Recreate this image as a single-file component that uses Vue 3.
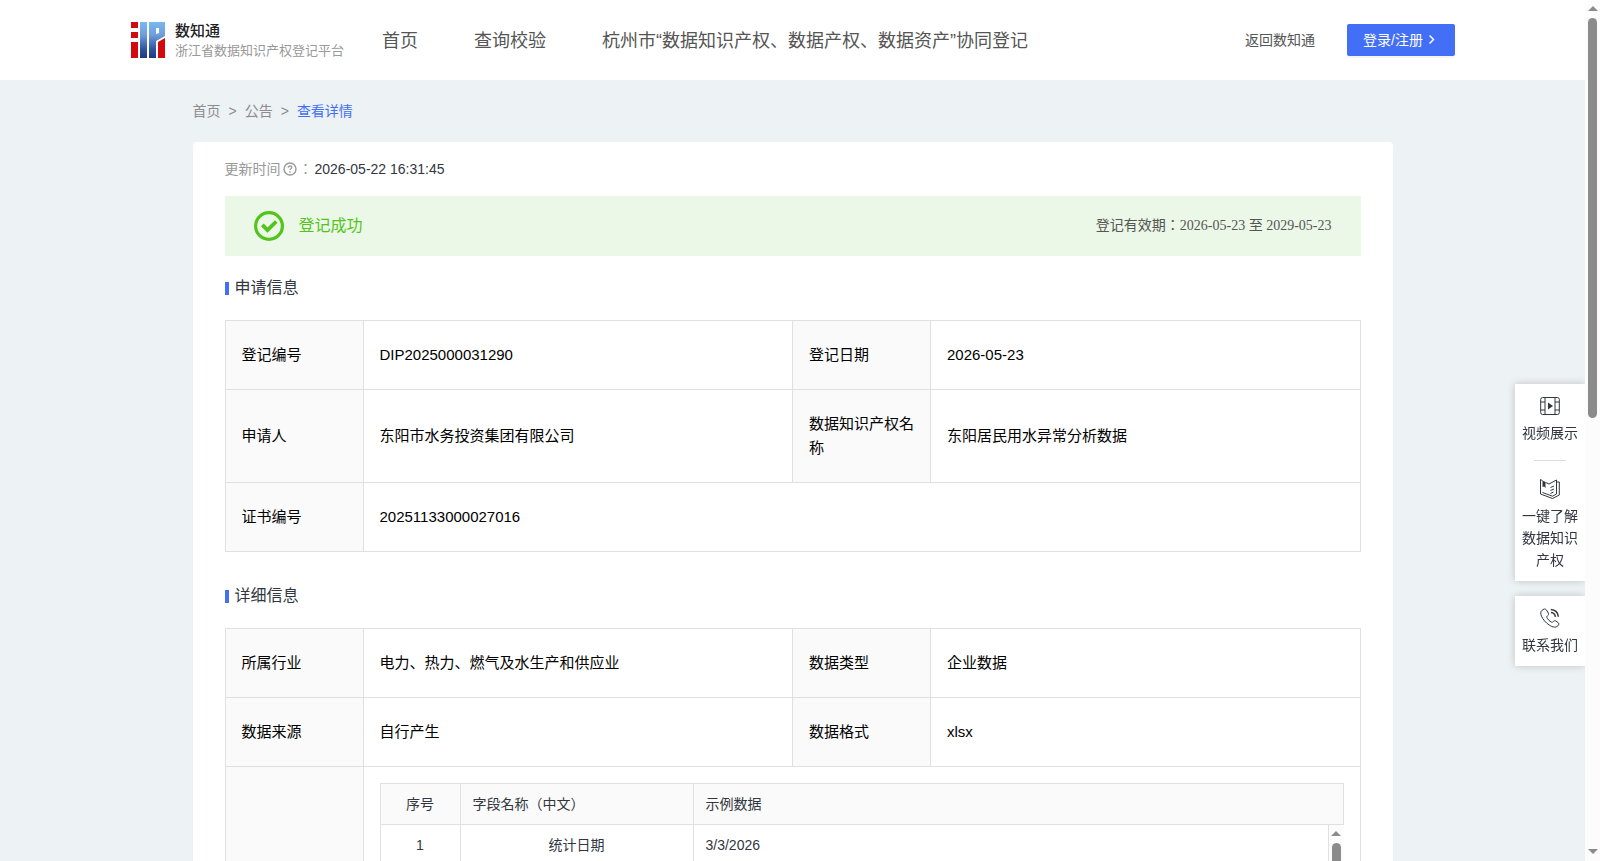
<template>
  <div class="page">
    <div class="page-body">
      <header class="header">
        <a class="logo" href="#">
          <svg class="logo-mark" viewBox="0 0 34 36" aria-hidden="true">
            <defs>
              <linearGradient id="logo-blue" x1="0" y1="0" x2="0" y2="1">
                <stop offset="0" stop-color="#7ab8ee" />
                <stop offset="0.35" stop-color="#6f9fdc" />
                <stop offset="0.75" stop-color="#2f559f" />
                <stop offset="1" stop-color="#21387f" />
              </linearGradient>
            </defs>
            <path fill="#d20a10" d="M0 0h7v6H0zM0 10h7v6H0zM0 20h7v16H0zM27 20l7-4v20h-7z" />
            <path fill="url(#logo-blue)" d="M9 0h7v36H9zM18 0h16v14l-9 5v17h-7z" />
            <path fill="#fff" d="M25 6h3v5l-3 1z" />
          </svg>
          <span class="logo-text">
            <strong>数知通</strong>
            <small>浙江省数据知识产权登记平台</small>
          </span>
        </a>
        <nav class="nav">
          <a v-for="item in navItems" :key="item" href="#">{{ item }}</a>
        </nav>
        <div class="header-right">
          <a href="#">返回数知通</a>
          <button type="button" class="login-btn">
            登录/注册
            <svg viewBox="0 0 12 12" aria-hidden="true">
              <path d="M2.500 1.500 6.500 5.500 2.500 9.500" fill="none" stroke="currentColor" stroke-width="1.5" />
            </svg>
          </button>
        </div>
      </header>

      <main class="container">
        <nav class="breadcrumb">
          <a href="#">首页</a>
          <span>&gt;</span>
          <a href="#">公告</a>
          <span>&gt;</span>
          <a href="#" class="current">查看详情</a>
        </nav>

        <div class="card">
          <div class="update-time">
            <span class="label">更新时间</span>
            <svg viewBox="0 0 14 14" aria-hidden="true">
              <circle cx="7" cy="7" r="6" fill="none" stroke="currentColor" stroke-width="1.4" />
              <path d="M5.2 5.7c0-1 .8-1.7 1.8-1.7s1.8.7 1.8 1.6c0 1.200-1.800 1.200-1.800 2.500" fill="none" stroke="currentColor" stroke-width="1.3" />
              <circle cx="7" cy="9.900" r="0.800" fill="currentColor" />
            </svg>
            <span class="label">：</span>
            <span>2026-05-22 16:31:45</span>
          </div>

          <div class="banner">
            <svg viewBox="0 0 30 30" aria-hidden="true">
              <circle cx="15" cy="15" r="13.400" fill="none" stroke="#52c41a" stroke-width="3.200" />
              <path d="M8.300 13.800 13.500 19 22.300 10.500" fill="none" stroke="#52c41a" stroke-width="3.800" />
            </svg>
            <span class="status">登记成功</span>
            <span class="validity">登记有效期：2026-05-23 至 2029-05-23</span>
          </div>

          <section class="section">
            <h2>申请信息</h2>
            <table class="info-table">
              <colgroup>
                <col class="col-label" />
                <col />
                <col class="col-label" />
                <col />
              </colgroup>
              <tbody>
                <tr v-for="row in applyRows" :key="row[0].label">
                  <template v-for="cell in row" :key="cell.label">
                    <th scope="row">{{ cell.label }}</th>
                    <td :colspan="row.length === 1 ? 3 : 1">{{ cell.value }}</td>
                  </template>
                </tr>
              </tbody>
            </table>
          </section>

          <section class="section">
            <h2>详细信息</h2>
            <table class="info-table">
              <colgroup>
                <col class="col-label" />
                <col />
                <col class="col-label" />
                <col />
              </colgroup>
              <tbody>
                <tr v-for="row in detailRows" :key="row[0].label">
                  <template v-for="cell in row" :key="cell.label">
                    <th scope="row">{{ cell.label }}</th>
                    <td>{{ cell.value }}</td>
                  </template>
                </tr>
                <tr>
                  <th></th>
                  <td colspan="3" class="sample-cell">
                    <table class="sample-table sample-head">
                      <thead>
                        <tr>
                          <th class="col-no">序号</th>
                          <th class="col-name">字段名称（中文）</th>
                          <th>示例数据</th>
                        </tr>
                      </thead>
                    </table>
                    <div class="sample-scroll">
                      <table class="sample-table">
                        <tbody>
                          <tr v-for="(item, index) in samples" :key="item.name">
                            <td class="col-no">{{ index + 1 }}</td>
                            <td class="col-name">{{ item.name }}</td>
                            <td>{{ item.value }}</td>
                          </tr>
                        </tbody>
                      </table>
                      <div class="scrollbar" aria-hidden="true">
                        <i class="arrow up"></i>
                        <i class="thumb"></i>
                        <i class="arrow down"></i>
                      </div>
                    </div>
                  </td>
                </tr>
              </tbody>
            </table>
          </section>
        </div>
      </main>
    </div>

    <div class="scrollbar page-scrollbar" aria-hidden="true">
      <i class="arrow up"></i>
      <i class="thumb"></i>
      <i class="arrow down"></i>
    </div>

    <aside class="float-bar">
      <div class="float-group">
        <a href="#" class="float-item">
          <svg viewBox="0 0 20 20" aria-hidden="true">
            <rect x="0.700" y="1.500" width="18.600" height="17" rx="2" />
            <path d="M5 1.500v17M15 1.500v17M0.700 6H5M0.700 14H5M15 6h4.300M15 14h4.300" />
            <path class="solid" d="M8 6.500 13 10 8 13.500z" />
          </svg>
          <span>视频展示</span>
        </a>
        <a href="#" class="float-item">
          <svg viewBox="0 0 20 20" aria-hidden="true">
            <path d="M.500.500v14.500l12 4.500 6.800-3.500V3H17M.500.500l2 1.200M5.500 3.500l3.500 1.500 7.500-4v14l-4 2.200L2.500 13.500" />
            <path class="solid" d="M2.500 1.500l3 1.500v6L4 7.500 2.500 8z" />
            <path d="M10.500 8.500l3.500-1.500M10.500 11.500l3.500-1.500M10.500 14.500l3-1.500" />
          </svg>
          <span>一键了解数据知识产权</span>
        </a>
      </div>
      <div class="float-group">
        <a href="#" class="float-item">
          <svg viewBox="0 0 20 20" aria-hidden="true">
            <path d="M1.800 2.500C3.500.800 5.500.500 6.500 2l1.800 3c.6 1.200.2 2-.8 2.800-1 .8-.9 1.400-.2 2.500 1 1.600 2.300 2.900 3.800 3.700 1 .5 1.500.4 2.200-.5.800-.9 1.600-1.100 2.600-.5l2 1.400c1.300 1 1.200 2.200 0 3.400-2 2-5 1.700-8.700-.8C5.500 14.500 3 11.500 1.500 8.200.500 5.800.5 3.800 1.800 2.500z" />
            <path class="wave" d="M11 4.500c2.600.3 4 1.700 4.500 4.300M10.800 1.500c4.200.3 7.200 3.200 7.600 7.300" />
          </svg>
          <span>联系我们</span>
        </a>
      </div>
    </aside>
  </div>
</template>

<script setup>
import { ref } from 'vue';

// 顶部导航
const navItems = ref([
  '首页',
  '查询校验',
  '杭州市“数据知识产权、数据产权、数据资产”协同登记'
]);

// 申请信息
const applyRows = ref([
  [
    { label: '登记编号', value: 'DIP2025000031290' },
    { label: '登记日期', value: '2026-05-23' }
  ],
  [
    { label: '申请人', value: '东阳市水务投资集团有限公司' },
    { label: '数据知识产权名称', value: '东阳居民用水异常分析数据' }
  ],
  [{ label: '证书编号', value: '20251133000027016' }]
]);

// 详细信息
const detailRows = ref([
  [
    { label: '所属行业', value: '电力、热力、燃气及水生产和供应业' },
    { label: '数据类型', value: '企业数据' }
  ],
  [
    { label: '数据来源', value: '自行产生' },
    { label: '数据格式', value: 'xlsx' }
  ]
]);

// 数据样例
const samples = ref([{ name: '统计日期', value: '3/3/2026' }]);
</script>

<style>
body {
  margin: 0;
  background-color: #edf2f5;
}
</style>

<style scoped>
.page {
  display: flex;
  height: 100vh;
  font-family: "Liberation Sans", "Noto Sans CJK JP", sans-serif;
  font-size: 14px;
  line-height: 22px;
  color: #32363f;
}

.page-body {
  flex: 1;
  min-width: 0;
  overflow-y: auto;
  scrollbar-width: none;
  background-color: #edf2f5;
}

a {
  color: inherit;
  text-decoration: none;
}

/* 顶部 */
.header {
  display: flex;
  align-items: center;
  height: 80px;
  padding: 0 130px 0 131px;
  box-sizing: border-box;
  background-color: #fff;
  color: #555;
}

.logo {
  display: flex;
  align-items: center;
  gap: 10px;
  width: 251px;
  white-space: nowrap;
}

.logo-mark {
  width: 34px;
  height: 36px;
}

.logo-text {
  display: flex;
  flex-direction: column;
  padding-top: 2px;
}

.logo-text strong {
  font-size: 15px;
  line-height: 20px;
  font-weight: 500;
  color: #222;
}

.logo-text small {
  font-size: 13px;
  line-height: 20px;
  color: #999;
}

.nav {
  display: flex;
  flex: 1;
  gap: 56px;
  padding-top: 2px;
  font-size: 18px;
  white-space: nowrap;
}

.header-right {
  display: flex;
  align-items: center;
  gap: 32px;
  white-space: nowrap;
}

.login-btn {
  display: flex;
  align-items: center;
  gap: 4px;
  height: 32px;
  padding: 0 16px;
  border: none;
  border-radius: 2px;
  background-color: #436ff6;
  box-shadow: 0 2px 0 rgba(0, 0, 0, 0.04);
  color: #fff;
  font-family: inherit;
  font-size: 14px;
  line-height: 22px;
  cursor: pointer;
}

.login-btn svg {
  width: 12px;
  height: 12px;
}

/* 内容区 */
.container {
  max-width: 1200px;
  margin: 0 auto;
}

.breadcrumb {
  display: flex;
  gap: 8px;
  padding: 20px 0;
  color: #8c8c8c;
}

.breadcrumb .current {
  color: #436ff6;
}

.card {
  padding: 0 32px 32px;
  border-radius: 4px;
  background-color: #fff;
}

.update-time {
  display: flex;
  align-items: center;
  padding: 16px 0;
}

.update-time .label,
.update-time svg {
  color: #999;
}

.update-time svg {
  width: 14px;
  height: 14px;
  margin: 0 2px;
}

.update-time .label + span {
  margin-left: 2px;
}

.banner {
  display: flex;
  align-items: center;
  height: 60px;
  padding: 0 29px;
  background-color: #ebf7e7;
}

.banner svg {
  width: 30px;
  height: 30px;
  margin-right: 15px;
}

.banner .status {
  flex: 1;
  font-size: 16px;
  color: #52c41a;
}

.banner .validity {
  font-family: "Liberation Serif", "Noto Sans CJK JP", serif;
  color: #555;
}

.section {
  padding-top: 20px;
}

.section + .section {
  padding-top: 32px;
}

.section h2 {
  display: flex;
  align-items: center;
  gap: 6px;
  margin: 0 0 20px;
  font-size: 16px;
  line-height: 24px;
  font-weight: 400;
}

.section h2::before {
  content: "";
  width: 4px;
  height: 13px;
  background-color: #436ff6;
}

.info-table {
  width: 100%;
  border-collapse: collapse;
  table-layout: fixed;
  font-size: 15px;
  line-height: 24px;
  color: #000;
}

.col-label {
  width: 138px;
}

.info-table th,
.info-table td {
  padding: 22px 16px;
  border: 1px solid #e0e0e0;
  font-weight: 400;
  text-align: left;
}

.info-table th {
  background-color: #fafafa;
}

.info-table .sample-cell {
  padding: 16px;
}

/* 数据样例 */
.sample-table {
  width: 100%;
  border-collapse: collapse;
  table-layout: fixed;
  font-size: 14px;
  line-height: 22px;
  color: #32363f;
}

.info-table .sample-table th,
.info-table .sample-table td {
  padding: 9px 12px;
}

.sample-table .col-no {
  width: 55px;
}

.sample-table .col-name {
  width: 208px;
}

.info-table .sample-table .col-no,
.info-table td.col-name {
  text-align: center;
}

.sample-scroll {
  display: flex;
  align-items: flex-start;
  height: 240px;
  border-bottom: 1px solid #e0e0e0;
}

.sample-scroll .sample-table {
  flex: 1;
}

.info-table .sample-scroll tr:first-child td {
  border-top: none;
}

/* 滚动条 */
.scrollbar {
  display: flex;
  flex-direction: column;
  align-items: center;
  flex: none;
  width: 15px;
  height: 100%;
  background-color: #fcfcfc;
}

.scrollbar .arrow {
  border: 5px solid transparent;
}

.scrollbar .up {
  margin-top: 1px;
  border-bottom-color: #8b8b8b;
}

.scrollbar .down {
  margin-top: auto;
  margin-bottom: 2px;
  border-top-color: #8b8b8b;
}

.scrollbar .thumb {
  width: 9px;
  height: 100px;
  margin-top: 7px;
  border-radius: 5px;
  background-color: #8b8b8b;
}

.page-scrollbar .thumb {
  height: 46.5vh;
}

/* 右侧悬浮栏 */
.float-bar {
  position: fixed;
  right: 15px;
  bottom: 195px;
  display: flex;
  flex-direction: column;
  gap: 15px;
  width: 70px;
}

.float-group {
  background-color: #fff;
  box-shadow: 0 0 8px rgba(0, 0, 0, 0.2);
  clip-path: inset(-12px 0 -12px -12px);
}

.float-item {
  display: flex;
  flex-direction: column;
  align-items: center;
  gap: 6px;
  padding: 12px 7px 10px;
  text-align: center;
}

.float-item + .float-item::before {
  content: "";
  width: 32px;
  height: 1px;
  margin-bottom: 12px;
  background-color: #dcdcdc;
}

.float-item + .float-item {
  padding-top: 6px;
}

.float-item svg {
  width: 20px;
  height: 20px;
  fill: none;
  stroke: #32363f;
  stroke-width: 1;
}

.float-item .solid {
  fill: #32363f;
  stroke: none;
}

.float-item .wave {
  stroke-width: 1.5;
}
</style>
